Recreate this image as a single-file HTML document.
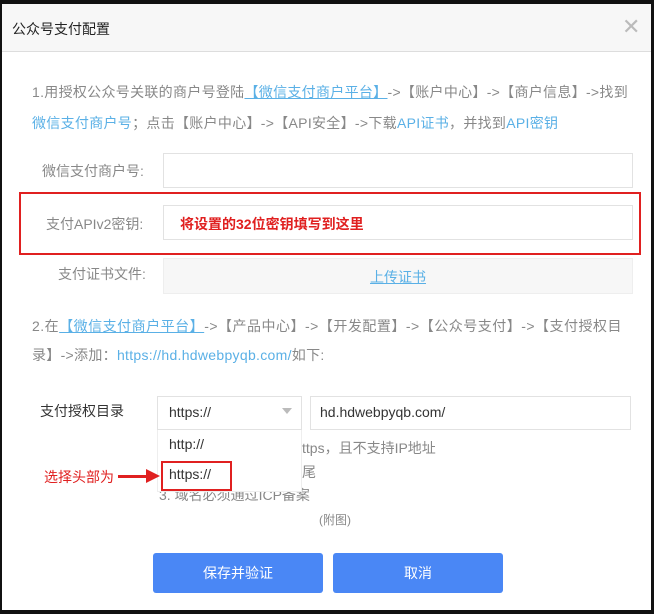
<!DOCTYPE html>
<html><head><meta charset="utf-8"><style>
*{margin:0;padding:0;box-sizing:border-box}
body{width:654px;height:614px;background:#111;position:relative;overflow:hidden;font-family:"Liberation Sans","Noto Sans CJK SC",sans-serif;}
.dlg{position:absolute;left:2px;top:4px;width:649px;height:606px;background:#fff}
.hd{position:absolute;left:0;top:0;width:649px;height:48px;background:#f7f7f7;border-bottom:1px solid #ddd}
.a{position:absolute;white-space:nowrap}
.g{color:#888}.b{color:#5ab0e6}
.box{position:absolute;border:1px solid #e2e2e2;background:#fff}
.btn{position:absolute;background:#4a87f5;color:#fff;border-radius:3px;font-size:14px;text-align:center;line-height:40px}
</style></head><body>
<div class="dlg">
<div class="hd"><span class="a" style="left:10px;top:15px;font-size:14px;color:#222">公众号支付配置</span>
<span class="a" style="left:620px;top:10px;font-size:22px;color:#bbb;font-weight:200">✕</span></div>
<div class="a g" style="left:30px;top:78px;font-size:14px;letter-spacing:0.3px">1.用授权公众号关联的商户号登陆<u class="b">【微信支付商户平台】</u>->【账户中心】->【商户信息】->找到</div>
<div class="a g" style="left:30px;top:109px;font-size:14px;letter-spacing:0.3px"><span class="b">微信支付商户号</span>；点击【账户中心】->【API安全】->下载<span class="b">API证书</span>，并找到<span class="b">API密钥</span></div>
<span class="a g" style="left:40px;top:157px;font-size:14px">微信支付商户号:</span>
<div class="box" style="left:161px;top:149px;width:470px;height:35px"></div>
<div class="a" style="left:17px;top:188px;width:622px;height:63px;border:2px solid #e02020"></div>
<span class="a g" style="left:44px;top:210px;font-size:14px">支付APIv2密钥:</span>
<div class="box" style="left:161px;top:201px;width:470px;height:35px"></div>
<span class="a" style="left:178px;top:210px;font-size:14px;color:#e02020;font-weight:bold">将设置的32位密钥填写到这里</span>
<span class="a g" style="left:56px;top:260px;font-size:14px">支付证书文件:</span>
<div class="a" style="left:161px;top:254px;width:470px;height:36px;background:#f7f7f7;border:1px solid #eee"></div>
<u class="a b" style="left:368px;top:263px;font-size:14px">上传证书</u>
<div class="a g" style="left:30px;top:312px;font-size:14px;letter-spacing:0.5px">2.在<u class="b">【微信支付商户平台】</u>->【产品中心】->【开发配置】->【公众号支付】->【支付授权目</div>
<div class="a g" style="left:30px;top:341px;font-size:14px;letter-spacing:0.3px">录】->添加：<span class="b">https://hd.hdwebpyqb.com/</span>如下:</div>
<span class="a" style="left:38px;top:397px;font-size:14px;color:#333">支付授权目录</span>
<div class="box" style="left:155px;top:392px;width:145px;height:34px"></div>
<span class="a" style="left:167px;top:400px;font-size:14px;color:#333">https://</span>
<span class="a" style="left:280px;top:404px;width:0;height:0;border:5px solid transparent;border-top:6px solid #bbb"></span>
<div class="box" style="left:308px;top:392px;width:321px;height:34px"></div>
<span class="a" style="left:318px;top:400px;font-size:14px;color:#333">hd.hdwebpyqb.com/</span>
<span class="a g" style="left:300px;top:434px;font-size:14px">ttps，且不支持IP地址</span>
<span class="a g" style="left:300px;top:458px;font-size:14px">尾</span>
<span class="a g" style="left:157px;top:481px;font-size:14px">3. 域名必须通过ICP备案</span>
<div class="a" style="left:155px;top:426px;width:145px;height:62px;background:#fff;border:1px solid #eee;border-top:none"></div>
<span class="a" style="left:167px;top:432px;font-size:14px;color:#333">http://</span>
<div class="a" style="left:159px;top:457px;width:71px;height:30px;border:2px solid #e02020"></div>
<span class="a" style="left:167px;top:462px;font-size:14px;color:#333">https://</span>
<span class="a" style="left:42px;top:463px;font-size:14px;color:#e02020">选择头部为</span>
<div class="a" style="left:116px;top:471px;width:30px;height:3px;background:#e02020"></div>
<span class="a" style="left:144px;top:465px;width:0;height:0;border:7px solid transparent;border-left:14px solid #e02020;border-right:none"></span>
<span class="a g" style="left:317px;top:507px;font-size:12px">(附图)</span>
<div class="btn" style="left:151px;top:549px;width:170px;height:40px">保存并验证</div>
<div class="btn" style="left:331px;top:549px;width:170px;height:40px">取消</div>
</div>
</body></html>
